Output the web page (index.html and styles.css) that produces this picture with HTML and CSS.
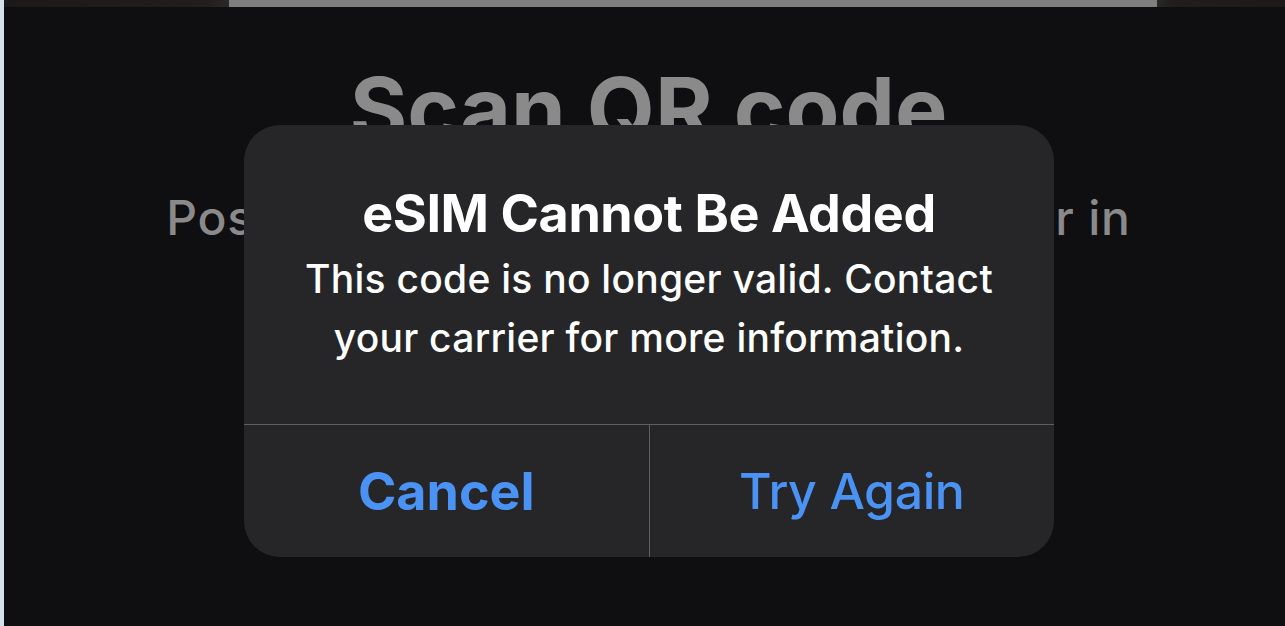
FILE: index.html
```html
<!DOCTYPE html>
<html lang="en">
<head>
    <meta charset="UTF-8">
    <meta name="viewport" content="width=device-width, initial-scale=1.0">
    <title>Scan QR code</title>
    <link rel="stylesheet" href="styles.css">
</head>
<body>

<div class="edge"></div>

<div class="screen">
    <div class="topbar">
        <div class="topbar-side"></div>
        <div class="topbar-mid"></div>
        <div class="topbar-side"></div>
    </div>

    <div class="stage">
        <h1 class="scan-title">Scan QR code</h1>
        <p class="scan-text">Position the QR code from your carrier in</p>

        <div class="alert">
            <div class="alert-body">
                <h2>eSIM Cannot Be Added</h2>
                <p>This code is no longer valid. Contact your carrier for more information.</p>
            </div>
            <div class="alert-actions">
                <button class="alert-btn cancel">Cancel</button>
                <button class="alert-btn retry">Try Again</button>
            </div>
        </div>
    </div>
</div>

</body>
</html>
```

FILE: styles.css
```css
body {
    margin: 0;
    padding: 0;
    height: 626px;
    display: flex;
    overflow: hidden;
    background-color: #0f0f11;
    font-family: Inter, "Noto Sans", sans-serif;
}
.edge {
    width: 4px;
    flex-shrink: 0;
    background: #d6dfec;
}
.screen {
    flex: 1;
    display: flex;
    flex-direction: column;
}
.topbar {
    height: 7px;
    display: flex;
}
.topbar-side {
    width: 225px;
    background: linear-gradient(90deg, #1c1a18 0%, #211f1d 90%, #2a2928 100%);
}
.topbar-side:last-child {
    width: 128px;
    background: linear-gradient(90deg, #2a2928 0%, #211f1d 10%, #1c1a18 100%);
}
.topbar-mid {
    flex: 1;
    background: #7f7f7f;
}
.stage {
    position: relative;
    flex: 1;
    display: flex;
    flex-direction: column;
    align-items: center;
    padding-left: 8px;
}
.scan-title {
    margin: 52px 0 0;
    font-size: 88px;
    line-height: 100px;
    font-weight: 700;
    color: #8a8a8b;
    white-space: nowrap;
}
.scan-text {
    margin: 30px 0 0;
    font-size: 48px;
    line-height: 58px;
    font-weight: 500;
    color: #8a8a8b;
    letter-spacing: 0.75px;
    white-space: nowrap;
}
.alert {
    position: absolute;
    left: 240px;
    top: 118px;
    width: 810px;
    height: 432px;
    border-radius: 36px;
    background: #262628;
    display: flex;
    flex-direction: column;
    overflow: hidden;
}
.alert-body {
    height: 300px;
    box-sizing: border-box;
    padding: 58px 40px 0;
    text-align: center;
    color: #ffffff;
    border-bottom: 1px solid #5e5e60;
}
.alert-body h2 {
    margin: 0;
    font-size: 52px;
    line-height: 62px;
    font-weight: 700;
    letter-spacing: -0.4px;
}
.alert-body p {
    margin: 4px 0 0;
    font-size: 39px;
    line-height: 59px;
    font-weight: 500;
    letter-spacing: 0.25px;
}
.alert-actions {
    flex: 1;
    display: flex;
}
.alert-btn {
    flex: 1;
    border: none;
    background: none;
    padding: 0;
    font-family: Inter, "Noto Sans", sans-serif;
    font-size: 52px;
    line-height: 131px;
    font-weight: 500;
    color: #4a93f4;
    cursor: pointer;
}
.alert-btn.cancel {
    font-weight: 700;
    border-right: 1px solid #5e5e60;
}
.alert-btn.retry {
    font-size: 50px;
    letter-spacing: -0.4px;
}
```
